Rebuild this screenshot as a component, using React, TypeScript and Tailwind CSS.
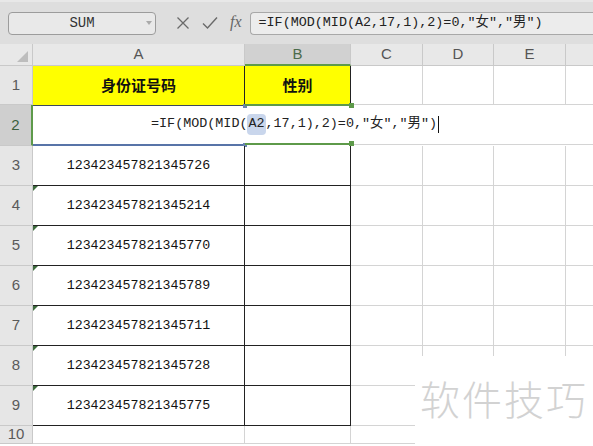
import React from 'react';

const COLS = [
  { key: 'A', w: 212 },
  { key: 'B', w: 106 },
  { key: 'C', w: 72 },
  { key: 'D', w: 71 },
  { key: 'E', w: 72 },
  { key: 'F', w: 60 },
];

const ids = [
  '123423457821345726',
  '123423457821345214',
  '123423457821345770',
  '123423457821345789',
  '123423457821345711',
  '123423457821345728',
  '123423457821345775',
];

const sans = { fontFamily: '"Liberation Sans", Arial, sans-serif' };
const mono = { fontFamily: '"Liberation Mono", "Noto Sans CJK SC", monospace' };
const cjk = { fontFamily: '"Noto Sans CJK SC", sans-serif' };

function RowHead({ n, h, active = false }: { n: number; h: string; active?: boolean }) {
  return (
    <div
      className={`${h} w-[33px] shrink-0 flex items-center justify-center text-[15px] border-b border-[#c9c9c9] ${
        active ? 'bg-[#cfcfcf] text-[#3d5f3d] border-r-2 border-r-[#5e9a4a]' : 'bg-[#e6e6e6] text-[#5a5a5a] border-r border-r-[#c9c9c9]'
      }`}
      style={sans}
    >
      {n}
    </div>
  );
}

function Grid({ h }: { h: string }) {
  return (
    <>
      <div className={`${h} w-[72px] shrink-0 border-r border-b border-[#d4d4d4] bg-white`} />
      <div className={`${h} w-[71px] shrink-0 border-r border-b border-[#d4d4d4] bg-white`} />
      <div className={`${h} w-[72px] shrink-0 border-r border-b border-[#d4d4d4] bg-white`} />
      <div className={`${h} flex-1 border-b border-[#d4d4d4] bg-white`} />
    </>
  );
}

export default function App() {
  return (
    <div className="w-[593px] h-[446px] overflow-hidden bg-white relative select-none">
      {/* toolbar / formula bar */}
      <div className="h-[44px] bg-[#dedede] border-t-2 border-[#e8e8e8] flex items-center pl-[8px] gap-0">
        <div className="w-[148px] h-[23px] rounded-[4px] border border-[#9c9c9c] bg-[#e9e9e9] flex items-center relative">
          <span className="flex-1 text-center text-[14px] text-[#333]" style={{ fontFamily: '"Liberation Mono", monospace' }}>
            SUM
          </span>
          <span className="absolute right-[3px] top-[8px] w-0 h-0 border-l-[3px] border-r-[3px] border-t-[4px] border-l-transparent border-r-transparent border-t-[#aaa]" />
        </div>
        <div className="flex items-center ml-[20px] gap-[12px] text-[#666]">
          <svg width="14" height="14" viewBox="0 0 14 14"><path d="M1.5 1.5 12.5 12.5M12.5 1.5 1.5 12.5" stroke="#6a6a6a" strokeWidth="1.3" fill="none" /></svg>
          <svg width="16" height="14" viewBox="0 0 16 14"><path d="M1 7.5 5.5 12 15 1.5" stroke="#6a6a6a" strokeWidth="1.4" fill="none" /></svg>
          <span className="italic text-[16px] text-[#666] -mt-[2px]" style={{ fontFamily: '"Liberation Serif", serif' }}>fx</span>
        </div>
        <div className="ml-[8px] flex-1 h-[23px] rounded-l-[4px] border border-r-0 border-[#a8a8a8] bg-[#ececec] flex items-center pl-[8px] text-[13.4px] text-[#222] whitespace-nowrap" style={mono}>
          =IF(MOD(MID(A2,17,1),2)=0,"女","男")
        </div>
      </div>

      {/* column headers */}
      <div className="flex h-[22px] bg-[#e8e8e8]">
        <div className="w-[33px] shrink-0 border-r border-b border-[#c9c9c9] relative">
          <span className="absolute right-[4px] bottom-[3px] w-0 h-0" style={{ borderBottom: '11px solid #bdbdbd', borderLeft: '11px solid transparent' }} />
        </div>
        {COLS.map((c) => (
          <div
            key={c.key}
            className={`shrink-0 flex items-center justify-center text-[15px] ${
              c.key === 'B'
                ? 'bg-[#d1d1d1] text-[#4b6b4b] border-b-2 border-b-[#5e9a4a] border-r border-r-[#c9c9c9]'
                : 'text-[#555] border-b border-r border-[#c9c9c9]'
            } ${c.key === 'F' ? 'flex-1 border-r-0' : ''}`}
            style={{ ...sans, width: c.w }}
          >
            {c.key === 'F' ? '' : c.key}
          </div>
        ))}
      </div>

      {/* row 1 */}
      <div className="flex">
        <RowHead n={1} h="h-[39px]" />
        <div className="h-[39px] w-[212px] shrink-0 bg-[#ffff00] border-r border-[#222] flex items-center justify-center font-bold text-[15px] text-[#111]" style={cjk}>
          身份证号码
        </div>
        <div className="h-[39px] w-[106px] shrink-0 bg-[#ffff00] border-r border-[#222] flex items-center justify-center font-bold text-[15px] text-[#111]" style={cjk}>
          性别
        </div>
        <Grid h="h-[39px]" />
      </div>

      {/* row 2 (editing) */}
      <div className="flex">
        <RowHead n={2} h="h-[41px]" active />
        <div className="h-[41px] w-[212px] shrink-0 bg-white border-t border-t-[#3e4a5c] border-b-2 border-b-[#5874a8] relative">
          <span className="absolute -right-[2px] -top-[2px] w-[4px] h-[4px] bg-[#6a84b0]" />
          <span className="absolute -right-[2px] -bottom-[3px] w-[4px] h-[4px] bg-[#6a84b0]" />
        </div>
        <div className="h-[41px] w-[106px] shrink-0 border-t-2 border-t-[#5e9a4a] border-b-2 border-b-[#5e9a4a] relative flex items-center justify-center z-10 -mt-[1px]">
          <span className="whitespace-nowrap text-[13.4px] text-[#222] flex items-center -ml-[6px]" style={mono}>
            =IF(MOD(MID(
            <span className="bg-[#c9d6ec] rounded-[4px] px-[1px]">A2</span>
            ,17,1),2)=0,"女","男")
            <span className="w-[1px] h-[17px] bg-[#111] ml-[1px]" />
          </span>
          <span className="absolute -right-[3px] -top-[3px] w-[5px] h-[5px] bg-[#5e9a4a]" />
          <span className="absolute -right-[3px] -bottom-[3px] w-[5px] h-[5px] bg-[#5e9a4a]" />
        </div>
        <div className="h-[41px] flex-1 bg-white border-t border-b border-[#d4d4d4] -mt-[1px]" />
      </div>

      {/* data rows */}
      {ids.map((id, i) => (
        <div className="flex" key={id}>
          <RowHead n={i + 3} h="h-[40px]" />
          <div className="h-[40px] w-[212px] shrink-0 bg-white border-r border-b border-[#222] flex items-center justify-center text-[13.3px] text-[#111] relative" style={mono}>
            {i > 0 && (
              <span className="absolute left-0 top-0 w-0 h-0" style={{ borderTop: '5px solid #3d6b3d', borderRight: '5px solid transparent' }} />
            )}
            {id}
          </div>
          <div className="h-[40px] w-[106px] shrink-0 bg-white border-r border-b border-[#222]" />
          <Grid h="h-[40px]" />
        </div>
      ))}

      {/* row 10 */}
      <div className="flex">
        <RowHead n={10} h="h-[18px]" />
        <div className="h-[18px] w-[212px] shrink-0 bg-white border-r border-b border-[#d4d4d4]" />
        <div className="h-[18px] w-[106px] shrink-0 bg-white border-r border-b border-[#d4d4d4]" />
        <Grid h="h-[18px]" />
      </div>

      {/* watermark */}
      <div className="absolute left-[415px] top-[356px] right-0 bottom-0 bg-white flex items-start justify-center pt-[22px]">
        <span className="text-[40px] leading-none text-[#d2d2d2] tracking-[2px]" style={{ fontFamily: '"Noto Sans CJK SC", sans-serif', fontWeight: 300 }}>
          软件技巧
        </span>
      </div>
    </div>
  );
}
